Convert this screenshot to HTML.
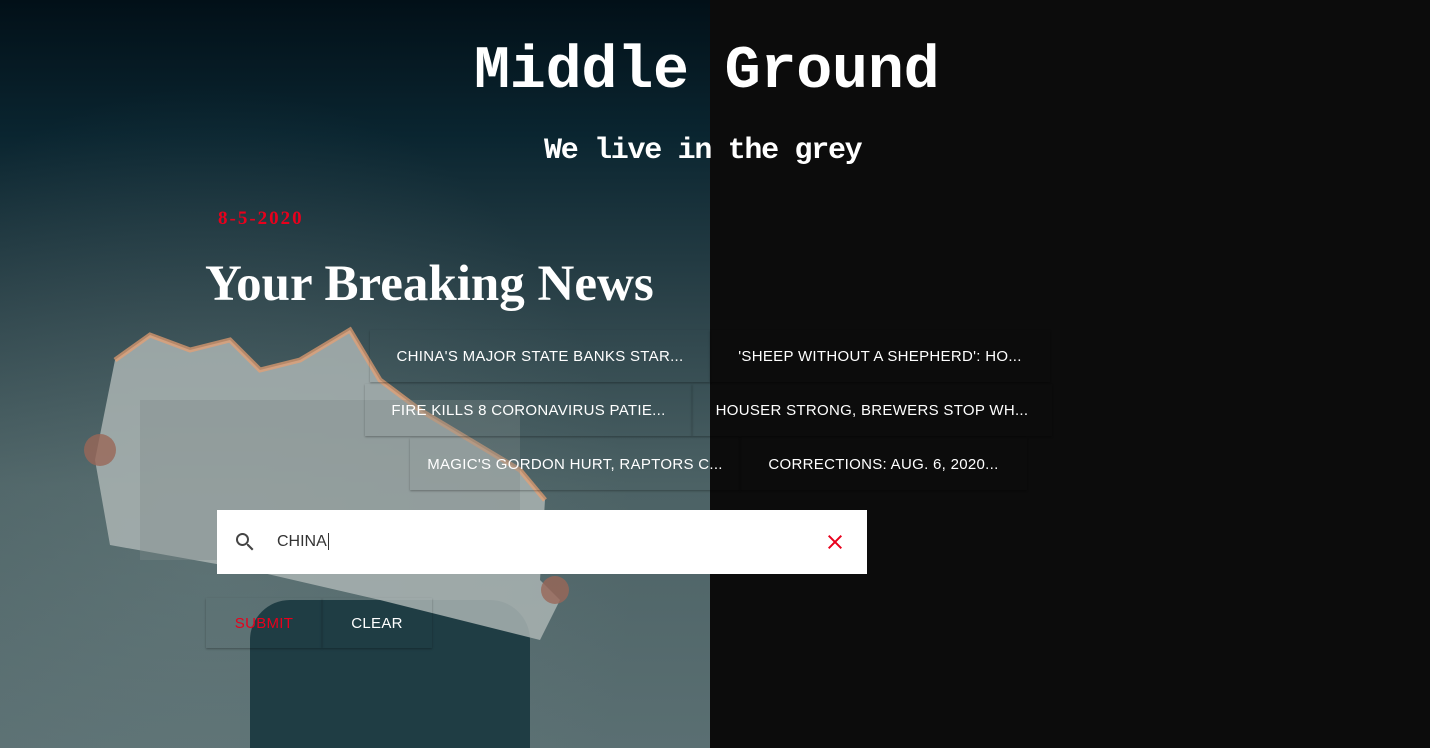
<!DOCTYPE html>
<html><head><meta charset="utf-8"><style>
*{margin:0;padding:0;box-sizing:border-box}
body{width:1430px;height:748px;overflow:hidden;background:#0c0c0c;position:relative;font-family:"Liberation Sans",sans-serif}
.photo{position:absolute;left:0;top:0;width:710px;height:748px;overflow:hidden;
background:linear-gradient(180deg,#021018 0%,#0a2530 18%,#2a4148 40%,#4c6265 65%,#5a6f72 100%)}
.abs{position:absolute}
.t{color:#fff;position:absolute;white-space:nowrap}
.chip{position:absolute;height:52px;display:flex;align-items:center;justify-content:center;color:#fff;font-size:15px;letter-spacing:.3px;box-shadow:0 1px 2px rgba(0,0,0,.3)}
</style></head><body>
<div class="photo">
  <div class="abs" style="left:0;top:0;width:710px;height:748px;background:radial-gradient(ellipse at 30% 75%,rgba(120,140,140,.3),transparent 60%)"></div>
  <div class="abs" style="left:250px;top:600px;width:280px;height:160px;background:#1f3d44;border-radius:40px 40px 0 0"></div>
  <svg class="abs" style="left:0;top:0" width="710" height="748">
    <polygon points="115,360 150,335 190,350 230,340 260,370 300,360 350,330 380,380 420,410 470,440 520,470 545,500 540,580 560,600 540,640 460,620 380,600 250,570 110,545 95,460" fill="#aab4b3" opacity=".85"/>
    <polyline points="115,360 150,335 190,350 230,340 260,370 300,360 350,330 380,380 420,410 470,440 520,470 545,500" fill="none" stroke="#e9a070" stroke-width="5" opacity=".7"/>
    <rect x="140" y="400" width="380" height="160" fill="#7d8a89" opacity=".35"/>
    <circle cx="100" cy="450" r="16" fill="#9a6658" opacity=".8"/>
    <circle cx="555" cy="590" r="14" fill="#9a6658" opacity=".8"/>
  </svg>
</div>
<div class="t" style="left:474px;top:38px;font:bold 60px 'Liberation Mono',monospace;letter-spacing:-0.2px">Middle Ground</div>
<div class="t" style="left:544px;top:134px;font:bold 30px 'Liberation Mono',monospace;letter-spacing:-1.3px">We live in the grey</div>
<div class="t" style="left:218px;top:208px;color:#e8001c;font:bold 19px 'Liberation Serif',serif;letter-spacing:2px">8-5-2020</div>
<div class="t" style="left:205px;top:255px;font:bold 51px 'Liberation Serif',serif">Your Breaking News</div>

<div class="chip" style="left:370px;top:330px;width:340px">CHINA'S MAJOR STATE BANKS STAR...</div>
<div class="chip" style="left:710px;top:330px;width:340px">'SHEEP WITHOUT A SHEPHERD': HO...</div>
<div class="chip" style="left:365px;top:384px;width:327px">FIRE KILLS 8 CORONAVIRUS PATIE...</div>
<div class="chip" style="left:692px;top:384px;width:360px">HOUSER STRONG, BREWERS STOP WH...</div>
<div class="chip" style="left:410px;top:438px;width:330px">MAGIC'S GORDON HURT, RAPTORS C...</div>
<div class="chip" style="left:740px;top:438px;width:287px">CORRECTIONS: AUG. 6, 2020...</div>

<div class="abs" style="left:217px;top:510px;width:650px;height:64px;background:#fff">
  <svg class="abs" style="left:16px;top:20px" width="24" height="24" viewBox="0 0 24 24"><path d="M15.5 14h-.79l-.28-.27A6.47 6.47 0 0016 9.5 6.5 6.5 0 109.5 16c1.61 0 3.09-.59 4.23-1.57l.27.28v.79l5 4.99L20.49 19l-4.99-5zm-6 0C7.01 14 5 11.99 5 9.5S7.01 5 9.5 5 14 7.01 14 9.5 11.99 14 9.5 14z" fill="#444"/></svg>
  <div class="abs" style="left:60px;top:23px;font-size:16px;color:#333">CHINA<span style="border-left:1px solid #333;margin-left:1px"></span></div>
  <svg class="abs" style="left:606px;top:20px" width="24" height="24" viewBox="0 0 24 24"><path d="M19 6.41L17.59 5 12 10.59 6.41 5 5 6.41 10.59 12 5 17.59 6.41 19 12 13.41 17.59 19 19 17.59 13.41 12z" fill="#e8001c"/></svg>
</div>
<div class="chip" style="left:206px;top:598px;width:116px;height:50px;color:#e8001c;font-size:15px">SUBMIT</div>
<div class="chip" style="left:322px;top:598px;width:110px;height:50px;font-size:15px">CLEAR</div>
</body></html>
